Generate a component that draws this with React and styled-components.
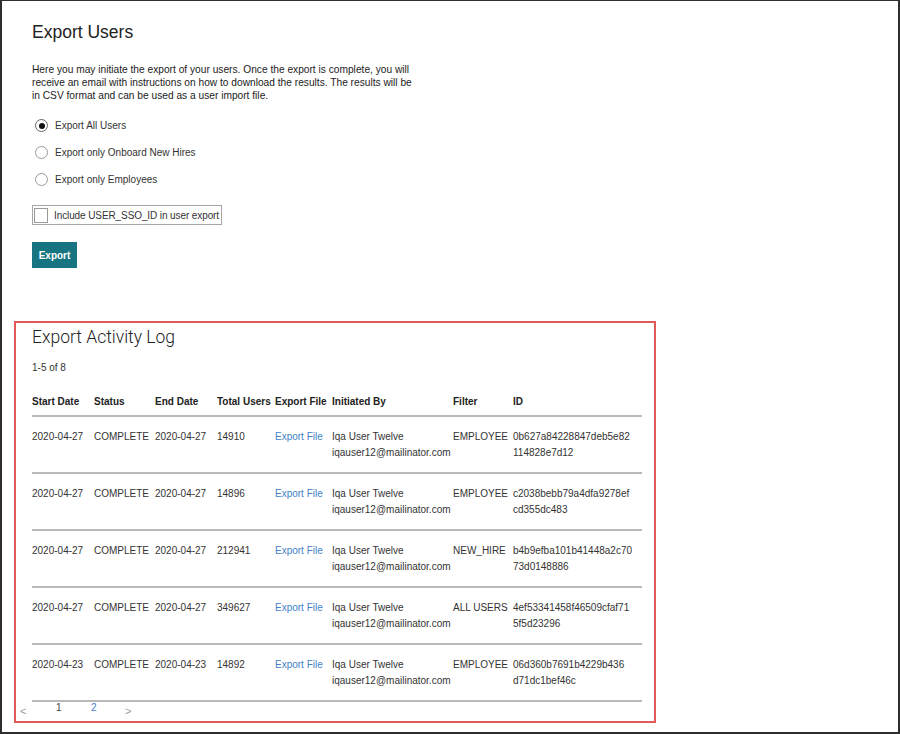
import React from "react";
import styled, { createGlobalStyle } from "styled-components";

const GlobalStyle = createGlobalStyle`
  html, body { margin: 0; padding: 0; background: #fff; }
  body { font-family: "Liberation Sans", Arial, sans-serif; color: #333; }
  * { box-sizing: border-box; }
`;

const Frame = styled.div`
  width: 900px;
  height: 734px;
  border: 2px solid #2e2e2e;
  border-top-width: 1px;
  overflow: hidden;
`;

const TopSection = styled.section`
  padding: 21px 0 0 30px;
  display: flex;
  flex-direction: column;
  align-items: flex-start;
`;

const Title = styled.h1`
  margin: 0;
  font-family: "Liberation Sans", Arial, sans-serif;
  font-weight: 400;
  font-size: 17.5px;
  line-height: 20px;
  color: #222;
`;

const Intro = styled.p`
  margin: 21px 0 0;
  font-size: 10.2px;
  line-height: 13px;
  white-space: nowrap;
  color: #222;
`;

const RadioGroup = styled.div`
  margin-top: 10px;
  display: flex;
  flex-direction: column;
`;

const RadioRow = styled.label`
  height: 27px;
  display: flex;
  align-items: center;
  gap: 7px;
  padding-left: 3px;
  font-size: 10px;
  color: #333;
`;

const RadioCircle = styled.span`
  width: 13px;
  height: 13px;
  border-radius: 50%;
  border: 1px solid ${(p) => (p.$checked ? "#666" : "#9a9a9a")};
  background: #fff;
  display: flex;
  align-items: center;
  justify-content: center;
  &::after {
    content: "";
    width: 6px;
    height: 6px;
    border-radius: 50%;
    background: ${(p) => (p.$checked ? "#111" : "transparent")};
  }
`;

const CheckField = styled.label`
  margin-top: 12px;
  height: 20px;
  border: 1px solid #a6a6a6;
  display: flex;
  align-items: center;
  gap: 6px;
  padding: 0 2px 0 1px;
  font-size: 10px;
  letter-spacing: -0.1px;
  white-space: nowrap;
  color: #333;
`;

const CheckBox = styled.span`
  width: 14px;
  height: 15px;
  border: 1px solid #9a9a9a;
  background: #fff;
`;

const ExportButton = styled.button`
  margin-top: 17px;
  height: 26px;
  width: 45px;
  padding: 0;
  border: none;
  background: #167580;
  color: #fff;
  font-family: "Liberation Sans", Arial, sans-serif;
  font-weight: 700;
  font-size: 10px;
`;

const LogSection = styled.section`
  margin: 53px 0 0 12px;
  width: 642px;
  height: 402px;
  border: 2px solid #e05a5c;
  padding: 0 0 0 16px;
  display: flex;
  flex-direction: column;
`;

const LogTitle = styled.h2`
  margin: 3px 0 0;
  font-family: Roboto, "Liberation Sans", sans-serif;
  font-weight: 300;
  font-size: 17.5px;
  line-height: 22px;
  color: #222;
`;

const Count = styled.div`
  margin-top: 13px;
  font-size: 10px;
  line-height: 14px;
  color: #333;
`;

const Table = styled.table`
  margin-top: 19px;
  width: 610px;
  table-layout: fixed;
  border-collapse: collapse;
  font-size: 10px;
  color: #333;
`;

const HeadCell = styled.th`
  text-align: left;
  font-weight: 700;
  font-size: 10px;
  line-height: 16px;
  padding: 0 0 5px;
  white-space: nowrap;
  color: #222;
  border-bottom: 2px solid #b9b9b9;
`;

const Row = styled.tr`
  border-bottom: 2px solid #b9b9b9;
`;

const Cell = styled.td`
  vertical-align: top;
  line-height: 16px;
  padding: 12px 0 11px;
  white-space: nowrap;
`;

const FileLink = styled.a`
  color: #3f82c8;
  text-decoration: none;
`;

const Pager = styled.nav`
  margin-left: -12px;
  display: flex;
  align-items: flex-start;
  height: 14px;
  font-size: 10px;
  line-height: 12px;
`;

const PageItem = styled.span`
  width: ${(p) => p.$w}px;
  color: ${(p) => (p.$active ? "#3f82c8" : p.$arrow ? "#999" : "#444")};
  font-size: ${(p) => (p.$arrow ? "11px" : "10px")};
  padding-top: ${(p) => (p.$arrow ? "3px" : "0")};
`;

const rows = [
  ["2020-04-27", "COMPLETE", "2020-04-27", "14910", "EMPLOYEE", ["0b627a84228847deb5e82", "114828e7d12"]],
  ["2020-04-27", "COMPLETE", "2020-04-27", "14896", "EMPLOYEE", ["c2038bebb79a4dfa9278ef", "cd355dc483"]],
  ["2020-04-27", "COMPLETE", "2020-04-27", "212941", "NEW_HIRE", ["b4b9efba101b41448a2c70", "73d0148886"]],
  ["2020-04-27", "COMPLETE", "2020-04-27", "349627", "ALL USERS", ["4ef53341458f46509cfaf71", "5f5d23296"]],
  ["2020-04-23", "COMPLETE", "2020-04-23", "14892", "EMPLOYEE", ["06d360b7691b4229b436", "d71dc1bef46c"]],
];

const cols = [62, 61, 62, 58, 57, 121, 60, 129];
const heads = ["Start Date", "Status", "End Date", "Total Users", "Export File", "Initiated By", "Filter", "ID"];

export default function App() {
  return (
    <>
      <GlobalStyle />
      <Frame>
        <TopSection>
          <Title>Export Users</Title>
          <Intro>
            Here you may initiate the export of your users. Once the export is complete, you will
            <br />
            receive an email with instructions on how to download the results. The results will be
            <br />
            in CSV format and can be used as a user import file.
          </Intro>
          <RadioGroup>
            <RadioRow>
              <RadioCircle $checked />
              Export All Users
            </RadioRow>
            <RadioRow>
              <RadioCircle />
              Export only Onboard New Hires
            </RadioRow>
            <RadioRow>
              <RadioCircle />
              Export only Employees
            </RadioRow>
          </RadioGroup>
          <CheckField>
            <CheckBox />
            Include USER_SSO_ID in user export
          </CheckField>
          <ExportButton>Export</ExportButton>
        </TopSection>

        <LogSection>
          <LogTitle>Export Activity Log</LogTitle>
          <Count>1-5 of 8</Count>
          <Table>
            <colgroup>
              {cols.map((w, i) => (
                <col key={i} style={{ width: w }} />
              ))}
            </colgroup>
            <thead>
              <tr>
                {heads.map((h) => (
                  <HeadCell key={h}>{h}</HeadCell>
                ))}
              </tr>
            </thead>
            <tbody>
              {rows.map((r, i) => (
                <Row key={i}>
                  <Cell>{r[0]}</Cell>
                  <Cell>{r[1]}</Cell>
                  <Cell>{r[2]}</Cell>
                  <Cell>{r[3]}</Cell>
                  <Cell>
                    <FileLink href="#">Export File</FileLink>
                  </Cell>
                  <Cell>
                    Iqa User Twelve
                    <br />
                    iqauser12@mailinator.com
                  </Cell>
                  <Cell>{r[4]}</Cell>
                  <Cell>
                    {r[5][0]}
                    <br />
                    {r[5][1]}
                  </Cell>
                </Row>
              ))}
            </tbody>
          </Table>
          <Pager>
            <PageItem $arrow $w={36}>&lt;</PageItem>
            <PageItem $w={35}>1</PageItem>
            <PageItem $active $w={34}>2</PageItem>
            <PageItem $arrow $w={10}>&gt;</PageItem>
          </Pager>
        </LogSection>
      </Frame>
    </>
  );
}
